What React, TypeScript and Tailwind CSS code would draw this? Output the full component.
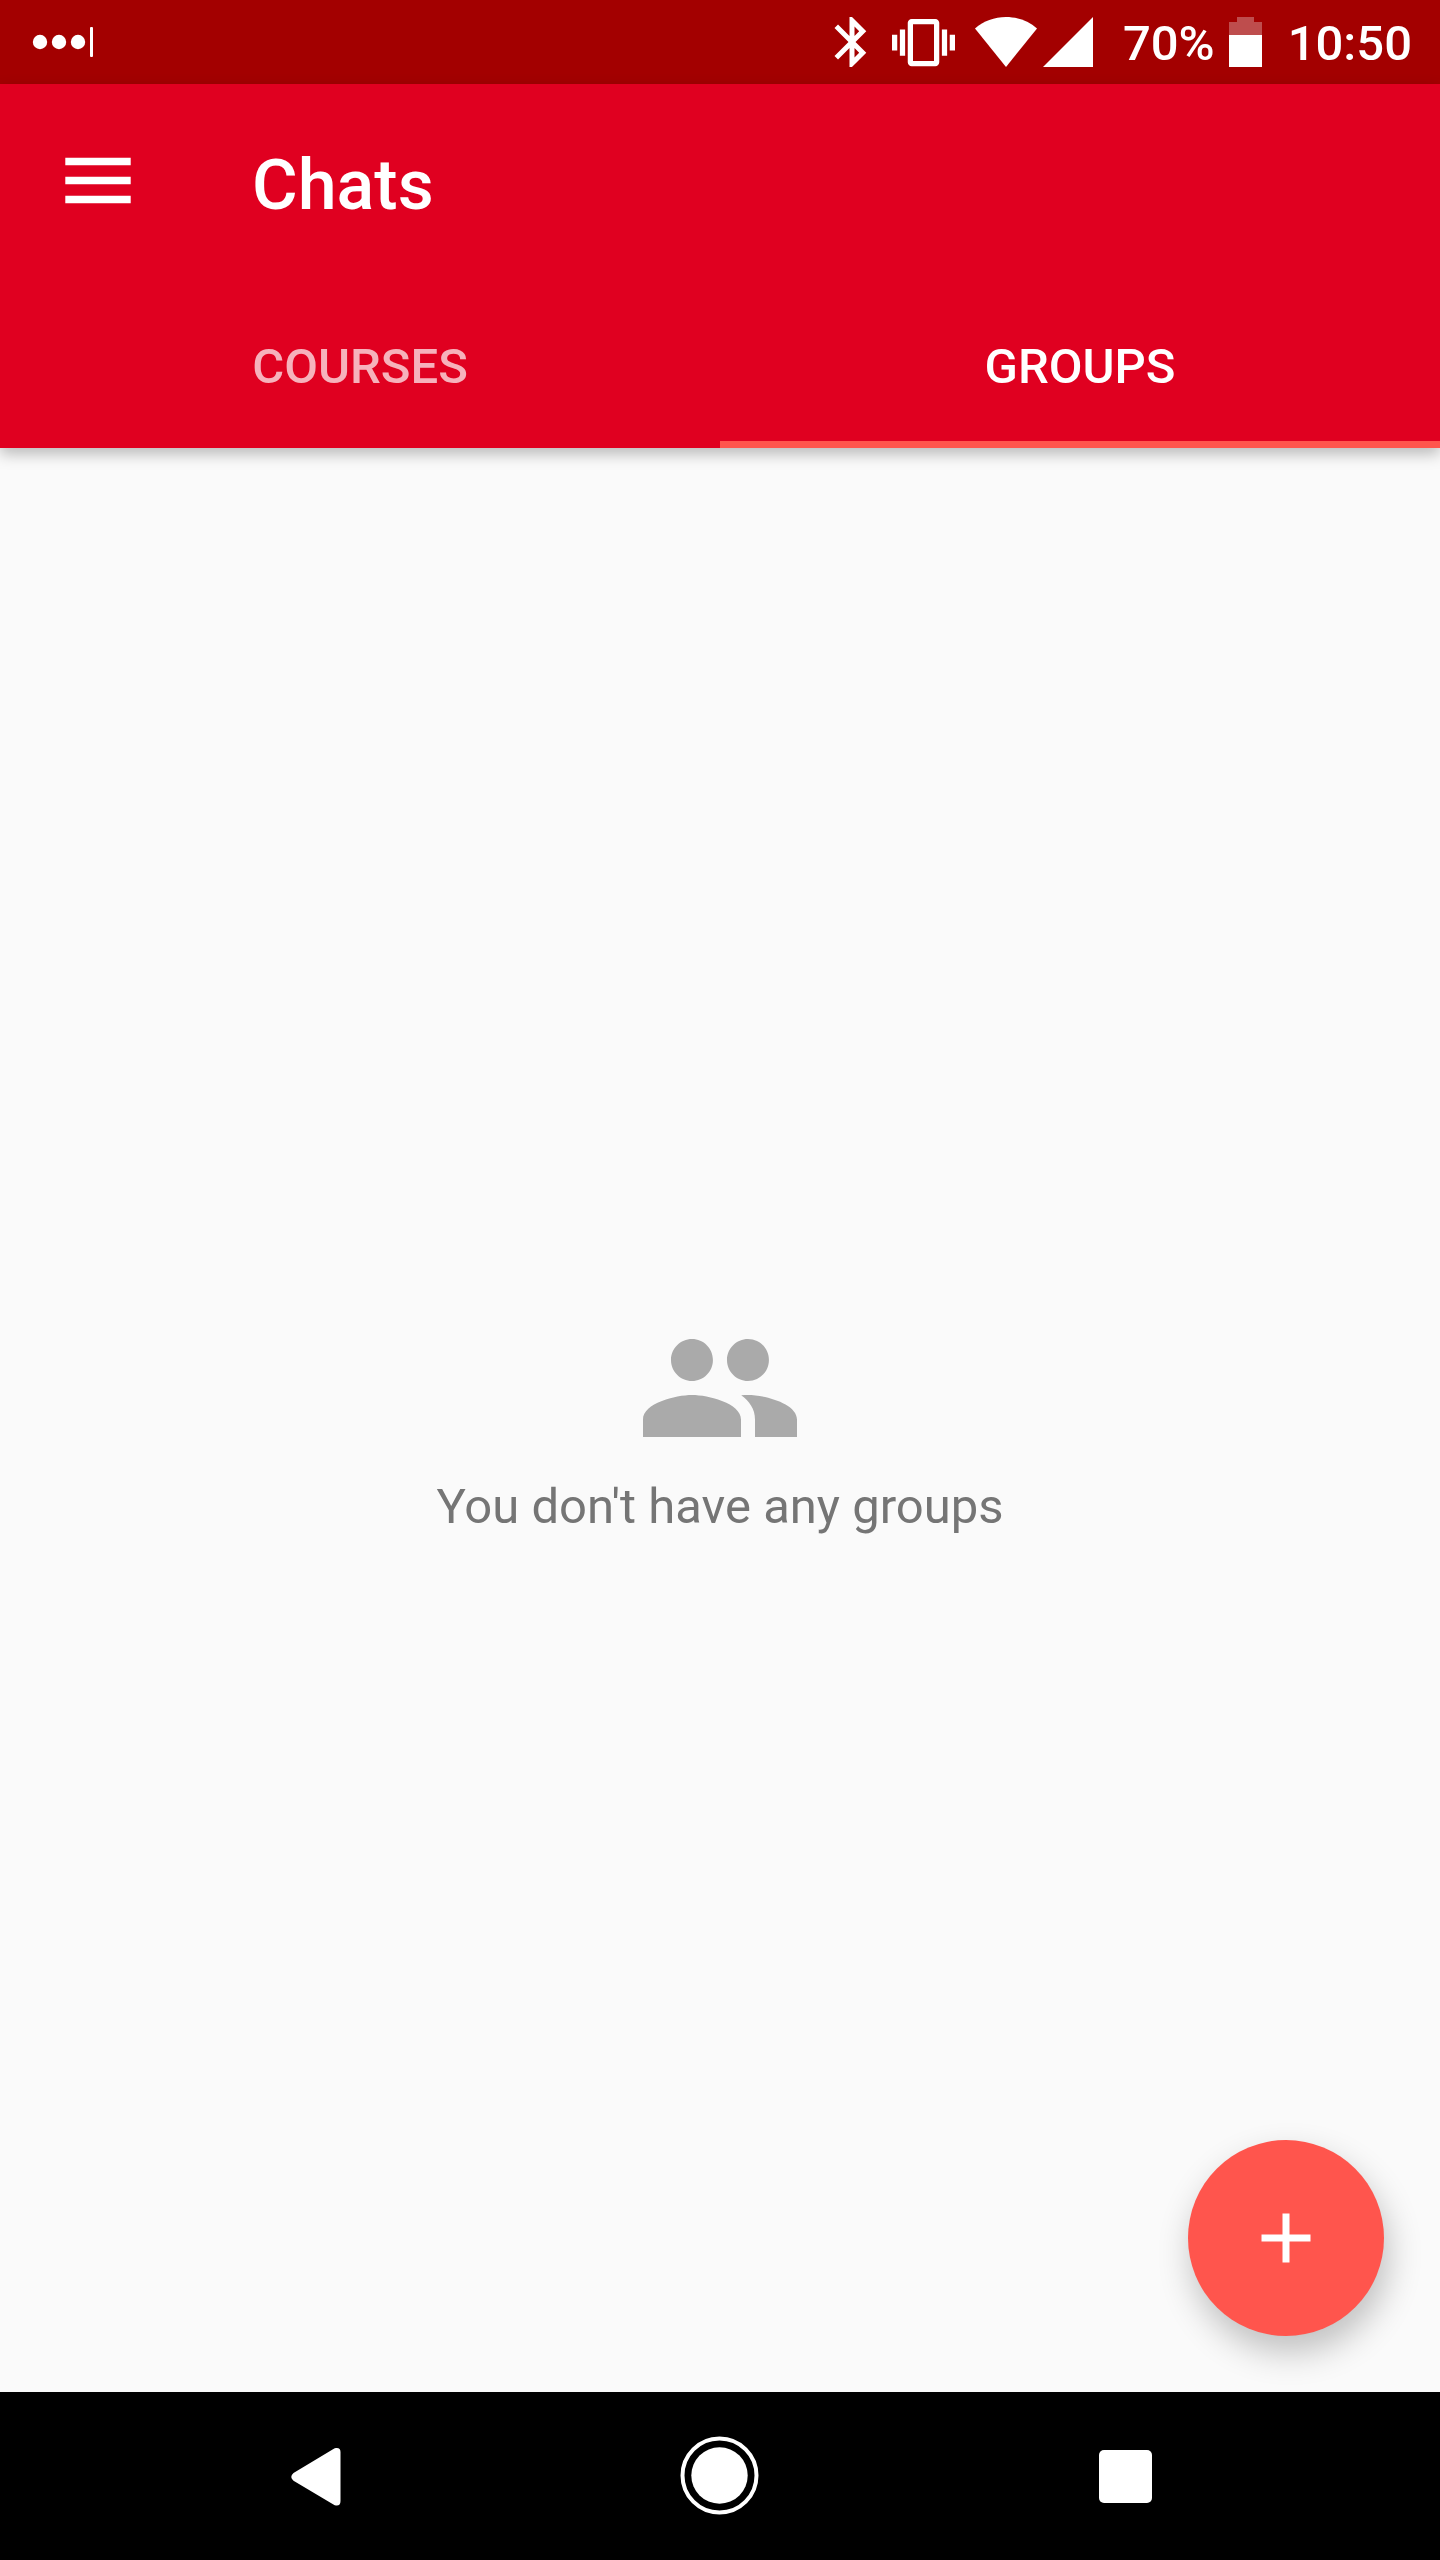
import { useState } from "react";
import { MdAdd, MdBluetooth, MdPeople, MdVibration } from "react-icons/md";

function StatusBar() {
  return (
    <div className="flex h-21 items-center justify-between bg-[#a30000] pr-7 pl-8 text-white">
      <svg className="h-8 w-16" viewBox="0 0 64 32" fill="currentColor" aria-label="Notification">
        <circle cx="8" cy="16" r="7.2" />
        <circle cx="27" cy="16" r="7.2" />
        <circle cx="46" cy="16" r="7.2" />
        <rect x="58" y="1" width="3" height="30" rx="1" />
      </svg>
      <div className="flex items-center text-[49px] leading-[58px] font-medium">
        <MdBluetooth className="size-15" aria-label="Bluetooth" />
        <MdVibration className="ml-2.5 size-[63px]" aria-label="Vibrate" />
        <svg className="ml-5 h-[50px] w-[62px]" viewBox="0 0 62 50" fill="currentColor" aria-label="Wi-Fi">
          <path d="M31 50 0 11.500C8.500 4 19.500 0 31 0s22.500 4 31 11.500Z" />
        </svg>
        <svg className="ml-1.5 size-[50px]" viewBox="0 0 50 50" fill="currentColor" aria-label="Signal">
          <path d="M50 0v50H0Z" />
        </svg>
        <span className="ml-[30px] pt-1">70%</span>
        <svg className="ml-3.5 h-[50px] w-[33px]" viewBox="0 0 33 50" fill="currentColor" aria-label="Battery">
          <path fillOpacity="0.3" d="M8 0h17v5h8v13H0V5h8Z" />
          <path d="M0 18h33v32H0Z" />
        </svg>
        <time className="ml-[26px] pt-1">10:50</time>
      </div>
    </div>
  );
}

const tabs = ["Courses", "Groups"];

export default function App() {
  const [active, setActive] = useState("Groups");

  return (
    <div className="flex min-h-screen flex-col bg-[#fafafa] font-[Roboto,sans-serif]">
      <StatusBar />
      <header className="relative bg-[#e00020] text-white shadow-[0_6px_14px_rgba(0,0,0,0.26)]">
        <div className="flex h-49 items-center pl-14">
          <button type="button" aria-label="Open menu" className="size-21">
            <svg className="size-21" viewBox="0 0 84 84" fill="currentColor">
              <path d="M9.300 17.700h65.400v7.600H9.300zM9.300 36.700h65.400v7.600H9.300zM9.300 55.700h65.400v7.600H9.300z" />
            </svg>
          </button>
          <h1 className="ml-28 pt-1.5 text-[70px] leading-[82px] font-medium">Chats</h1>
        </div>
        <div role="tablist" className="grid h-42 grid-cols-2">
          {tabs.map((tab) => (
            <button
              key={tab}
              type="button"
              role="tab"
              aria-selected={active === tab}
              onClick={() => setActive(tab)}
              className={
                active === tab
                  ? "border-b-7 border-[#ff554d] pt-3 text-[49px] leading-[58px] font-medium text-white uppercase"
                  : "border-b-7 border-transparent pt-3 text-[49px] leading-[58px] font-medium text-[#f6b2bc] uppercase"
              }
            >
              {tab}
            </button>
          ))}
        </div>
      </header>

      <main className="relative flex flex-1 flex-col items-center justify-center gap-1.5">
        <MdPeople className="size-42 text-[#aaaaaa]" />
        <p className="text-[49px] leading-[58px] text-[#757575]">You don't have any groups</p>
        <button
          type="button"
          aria-label="Add group"
          className="absolute right-14 bottom-14 flex size-49 items-center justify-center rounded-full bg-[#ff554d] text-white shadow-[4px_16px_34px_rgba(0,0,0,0.24)]"
        >
          <MdAdd className="size-21" />
        </button>
      </main>

      <nav className="relative grid h-42 grid-cols-3 items-center justify-items-center bg-black px-28 text-white">
        <button type="button" aria-label="Back">
          <svg className="size-21" viewBox="0 0 84 84" fill="currentColor">
            <path d="M67.500 18v49q0 5-4.500 4.500-1 0-3-1.300L20.500 46.800q-4.500-3.800 0-7.700L60 15.300q2-1.300 3-1.300 4.500-.5 4.500 4Z" />
          </svg>
        </button>
        <button type="button" aria-label="Home">
          <svg className="size-21" viewBox="0 0 84 84" fill="currentColor">
            <circle cx="41.500" cy="41.500" r="28.200" />
            <circle cx="41.500" cy="41.500" r="37" fill="none" stroke="currentColor" strokeWidth="4" />
          </svg>
        </button>
        <button type="button" aria-label="Recent apps">
          <svg className="size-21" viewBox="0 0 84 84" fill="currentColor">
            <rect x="16" y="16" width="53" height="53" rx="5" />
          </svg>
        </button>
      </nav>
    </div>
  );
}
